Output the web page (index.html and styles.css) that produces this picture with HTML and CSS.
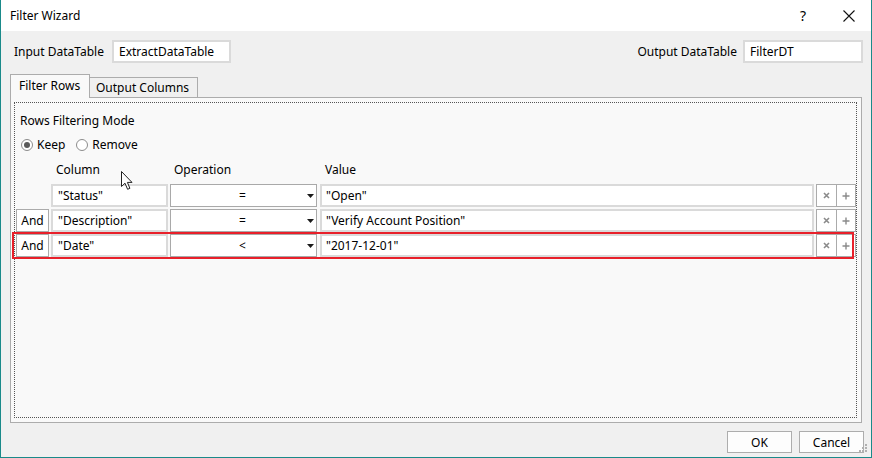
FILE: index.html
```html
<!DOCTYPE html>
<html>
<head>
<meta charset="utf-8">
<title>Filter Wizard</title>
<link rel="stylesheet" href="styles.css">
</head>
<body>
<div class="window">
  <div class="titlebar">
    <span class="title">Filter Wizard</span>
    <span class="help">?</span>
    <svg class="close" width="12" height="12" viewBox="0 0 12 12"><path d="M0.5 0.5 L11.5 11.5 M11.5 0.5 L0.5 11.5" stroke="#111" stroke-width="1.1" fill="none"/></svg>
  </div>
  <div class="body">
    <div class="io-row">
      <div class="io">
        <span class="io-label in-label">Input DataTable</span>
        <div class="textbox io-box in-box">ExtractDataTable</div>
      </div>
      <div class="io">
        <span class="io-label out-label">Output DataTable</span>
        <div class="textbox io-box out-box">FilterDT</div>
      </div>
    </div>
    <div class="tabs">
      <div class="tab active">Filter Rows</div>
      <div class="tab">Output Columns</div>
    </div>
    <div class="panel">
      <div class="focus">
        <div class="mode-label">Rows Filtering Mode</div>
        <div class="radios">
          <span class="radio checked"></span><span class="radio-text">Keep</span>
          <span class="radio"></span><span class="radio-text">Remove</span>
        </div>
        <div class="row header">
          <span class="c-and"></span>
          <span class="c-col h">Column</span>
          <span class="c-op h">Operation</span>
          <span class="c-val h">Value</span>
        </div>
        <div class="row">
          <span class="c-and empty"></span>
          <div class="textbox c-col">"Status"</div>
          <div class="combo c-op"><span class="op-text">=</span><svg class="arrow" width="7" height="4" viewBox="0 0 7 4"><path d="M0 0 H7 L3.5 4 Z" fill="#1a1a1a"/></svg></div>
          <div class="textbox c-val">"Open"</div>
          <div class="sbtn del"><svg width="7" height="7" viewBox="0 0 7 7"><path d="M1 1 L6 6 M6 1 L1 6" stroke="#8a8a8a" stroke-width="1.6"/></svg></div>
          <div class="sbtn add"><svg width="8" height="8" viewBox="0 0 8 8"><path d="M4 0.5 V7.5 M0.5 4 H7.5" stroke="#8a8a8a" stroke-width="1.4"/></svg></div>
        </div>
        <div class="row">
          <div class="c-and andbox">And</div>
          <div class="textbox c-col">"Description"</div>
          <div class="combo c-op"><span class="op-text">=</span><svg class="arrow" width="7" height="4" viewBox="0 0 7 4"><path d="M0 0 H7 L3.5 4 Z" fill="#1a1a1a"/></svg></div>
          <div class="textbox c-val">"Verify Account Position"</div>
          <div class="sbtn del"><svg width="7" height="7" viewBox="0 0 7 7"><path d="M1 1 L6 6 M6 1 L1 6" stroke="#8a8a8a" stroke-width="1.6"/></svg></div>
          <div class="sbtn add"><svg width="8" height="8" viewBox="0 0 8 8"><path d="M4 0.5 V7.5 M0.5 4 H7.5" stroke="#8a8a8a" stroke-width="1.4"/></svg></div>
        </div>
        <div class="row">
          <div class="c-and andbox">And</div>
          <div class="textbox c-col">"Date"</div>
          <div class="combo c-op"><span class="op-text">&lt;</span><svg class="arrow" width="7" height="4" viewBox="0 0 7 4"><path d="M0 0 H7 L3.5 4 Z" fill="#1a1a1a"/></svg></div>
          <div class="textbox c-val">"2017-12-01"</div>
          <div class="sbtn del"><svg width="7" height="7" viewBox="0 0 7 7"><path d="M1 1 L6 6 M6 1 L1 6" stroke="#8a8a8a" stroke-width="1.6"/></svg></div>
          <div class="sbtn add"><svg width="8" height="8" viewBox="0 0 8 8"><path d="M4 0.5 V7.5 M0.5 4 H7.5" stroke="#8a8a8a" stroke-width="1.4"/></svg></div>
        </div>
        <div class="highlight"></div>
        <svg class="cursor" width="13" height="20" viewBox="0 0 13 20"><path d="M0.5 0.5 L0.5 15.5 L4 12.2 L6.6 18.3 L8.9 17.3 L6.4 11.4 L11 11.4 Z" fill="#fff" stroke="#222" stroke-width="1" stroke-linejoin="round"/></svg>
      </div>
    </div>
    <div class="buttons">
      <div class="btn">OK</div>
      <div class="btn">Cancel</div>
    </div>
  </div>
  <svg class="grip" width="12" height="12" viewBox="0 0 12 12">
    <rect x="8" y="2" width="2" height="2" fill="#b0b0b0"/>
    <rect x="5" y="5" width="2" height="2" fill="#b0b0b0"/>
    <rect x="8" y="5" width="2" height="2" fill="#b0b0b0"/>
    <rect x="2" y="8" width="2" height="2" fill="#b0b0b0"/>
    <rect x="5" y="8" width="2" height="2" fill="#b0b0b0"/>
    <rect x="8" y="8" width="2" height="2" fill="#b0b0b0"/>
  </svg>
</div>
</body>
</html>
```
FILE: styles.css
```css
html, body {
  margin: 0;
  padding: 0;
  width: 872px;
  height: 458px;
  overflow: hidden;
  background: #f0f0f0;
}
.window {
  position: relative;
  box-sizing: border-box;
  width: 872px;
  height: 458px;
  border: 1px solid #1a8a8a;
  border-top: none;
  background: #f0f0f0;
  display: flex;
  flex-direction: column;
  font-family: "Noto Sans", "Liberation Sans", sans-serif;
  font-size: 12px;
  color: #000;
}
.titlebar {
  height: 31px;
  background: #fff;
  display: flex;
  align-items: center;
  flex-shrink: 0;
}
.title {
  margin-left: 9px;
  flex: 1;
  line-height: 16px;
}
.help {
  width: 12px;
  text-align: center;
  margin-right: 34px;
  font-size: 14px;
  line-height: 16px;
}
.close {
  margin-right: 16px;
}
.body {
  flex: 1;
  display: flex;
  flex-direction: column;
  padding: 0 9px 0 9px;
}
.io-row {
  margin-top: 9px;
  height: 23px;
  display: flex;
  justify-content: space-between;
  margin-right: -1px;
}
.io {
  display: flex;
  align-items: center;
}
.io-label {
  line-height: 16px;
}
.in-label {
  width: 98px;
  padding-left: 4px;
}
.out-label {
  margin-right: 6px;
}
.textbox {
  box-sizing: border-box;
  background: #fff;
  border: 2px solid #dadada;
  display: flex;
  align-items: center;
  white-space: nowrap;
  overflow: hidden;
}
.io-box {
  height: 23px;
  padding-left: 5px;
}
.in-box { width: 119px; }
.out-box { width: 120px; }
.tabs {
  margin-top: 12px;
  height: 22px;
  display: flex;
  align-items: flex-end;
  position: relative;
  z-index: 1;
}
.tab {
  box-sizing: border-box;
  border: 1px solid #acacac;
  border-bottom: none;
  height: 20px;
  padding: 0 6px;
  line-height: 19px;
  background: #f0f0f0;
  margin-left: -1px;
  width: 109px;
}
.tab.active {
  margin-left: 0;
  height: 24px;
  margin-bottom: -1px;
  background: #f9f9f9;
  width: 80px;
  padding-left: 8px;
  line-height: 22px;
  position: relative;
  z-index: 2;
}
.panel {
  box-sizing: border-box;
  width: 852px;
  height: 326px;
  border: 1px solid #acacac;
  background: #f9f9f9;
  padding: 4px 4px 4px 3px;
}
.focus {
  position: relative;
  box-sizing: border-box;
  height: 316px;
  border: 1px dotted #555;
}
.mode-label {
  margin-top: 10px;
  margin-left: 5px;
  line-height: 16px;
}
.radios {
  margin-top: 8px;
  margin-left: 6px;
  height: 16px;
  display: flex;
  align-items: center;
}
.radio {
  box-sizing: border-box;
  width: 12px;
  height: 12px;
  border-radius: 50%;
  border: 1px solid #8c8c8c;
  background: #fff;
  display: flex;
  align-items: center;
  justify-content: center;
}
.radio.checked::after {
  content: "";
  width: 6px;
  height: 6px;
  border-radius: 50%;
  background: #5a5a5a;
}
.radio-text {
  margin-left: 4px;
  margin-right: 11px;
  line-height: 16px;
}
.row {
  display: flex;
  align-items: stretch;
  height: 23px;
  margin-top: 2px;
  padding-left: 1px;
}
.row.header {
  margin-top: 9px;
  height: 16px;
  line-height: 16px;
  margin-bottom: 6px;
}
.h { padding-left: 4px; box-sizing: border-box; }
.c-and { width: 33px; box-sizing: border-box; flex-shrink: 0; }
.c-col { width: 117px; margin-left: 2px; flex-shrink: 0; padding-left: 5px; }
.c-op { width: 147px; margin-left: 2px; flex-shrink: 0; }
.c-val { width: 494px; margin-left: 3px; flex-shrink: 0; padding-left: 4px; }
.row.header .c-val { padding-left: 5px; }
.andbox {
  border: 1px solid #ababab;
  background: #fff;
  display: flex;
  align-items: center;
  justify-content: center;
}
.combo {
  box-sizing: border-box;
  border: 1px solid #a9a9a9;
  background: #fff;
  display: flex;
  align-items: center;
}
.op-text {
  flex: 1;
  text-align: center;
  padding-left: 7px;
}
.arrow {
  margin-right: 2px;
}
.sbtn {
  box-sizing: border-box;
  width: 21px;
  border: 1px solid #ababab;
  background: #fff;
  display: flex;
  align-items: center;
  justify-content: center;
  flex-shrink: 0;
}
.sbtn.del { margin-left: 2px; }
.sbtn.add { margin-left: -1px; width: 20px; }
.highlight {
  position: absolute;
  left: -3px;
  top: 129px;
  width: 842px;
  height: 27px;
  box-sizing: border-box;
  border: 2px solid #e8202a;
  pointer-events: none;
}
.cursor {
  position: absolute;
  left: 106px;
  top: 68px;
}
.buttons {
  margin-top: 8px;
  margin-right: -2px;
  display: flex;
  justify-content: flex-end;
  gap: 7px;
}
.btn {
  box-sizing: border-box;
  width: 65px;
  height: 22px;
  border: 1px solid #adadad;
  background: #fdfdfd;
  display: flex;
  align-items: center;
  justify-content: center;
}
.grip {
  position: absolute;
  right: 2px;
  bottom: 3px;
}
```
